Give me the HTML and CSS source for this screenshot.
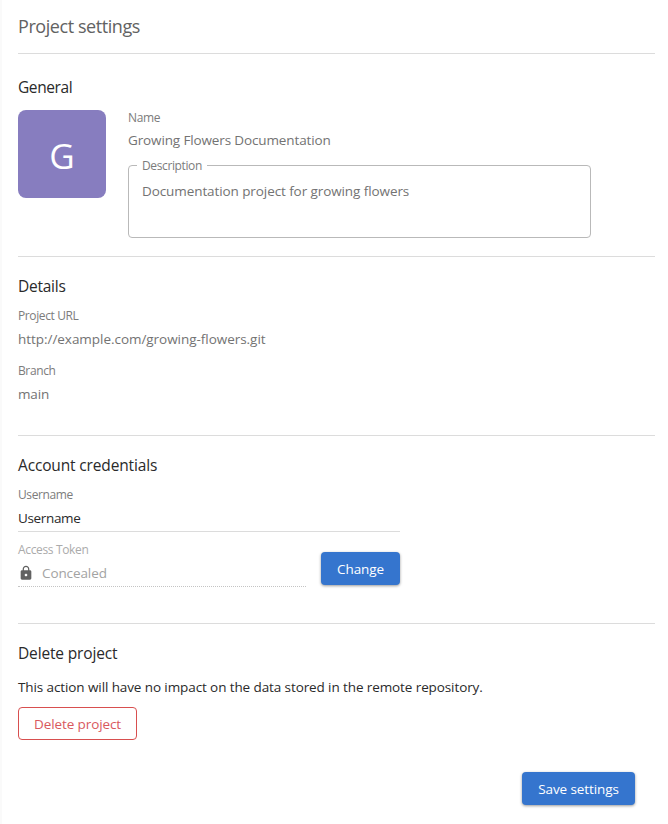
FILE: index.html
```html
<!DOCTYPE html>
<html lang="en">
<head>
<meta charset="utf-8">
<title>Project settings</title>
<link rel="stylesheet" href="styles.css">
</head>
<body>
<main class="page">
  <h1 class="title"><span>Project settings</span></h1>

  <section class="section general">
    <h2 class="heading heading-general"><span>General</span></h2>
    <div class="general-row">
      <div class="avatar">G</div>
      <div class="general-fields">
        <div class="label label-name"><span>Name</span></div>
        <div class="value value-name"><span>Growing Flowers Documentation</span></div>
        <fieldset class="description">
          <legend class="label label-description"><span>Description</span></legend>
          <div class="value value-description"><span>Documentation project for growing flowers</span></div>
        </fieldset>
      </div>
    </div>
  </section>

  <section class="section details">
    <h2 class="heading heading-details"><span>Details</span></h2>
    <div class="field">
      <div class="label"><span>Project URL</span></div>
      <div class="value value-url"><span>http://example.com/growing-flowers.git</span></div>
    </div>
    <div class="field">
      <div class="label"><span>Branch</span></div>
      <div class="value"><span>main</span></div>
    </div>
  </section>

  <section class="section account">
    <h2 class="heading"><span>Account credentials</span></h2>
    <div class="field field-line">
      <div class="label"><span>Username</span></div>
      <div class="value value-username"><span>Username</span></div>
    </div>
    <div class="token-row">
      <div class="field field-token">
        <div class="label label-token"><span>Access Token</span></div>
        <div class="value value-token">
          <svg class="lock" viewBox="0 0 24 24" width="16" height="16"><path fill="currentColor" d="M18 8h-1V6c0-2.76-2.24-5-5-5S7 3.24 7 6v2H6c-1.100 0-2 .9-2 2v10c0 1.100.9 2 2 2h12c1.100 0 2-.9 2-2V10c0-1.100-.9-2-2-2zm-6 9c-1.100 0-2-.9-2-2s.9-2 2-2 2 .9 2 2-.9 2-2 2zm3.100-9H8.900V6c0-1.710 1.390-3.100 3.100-3.100s3.100 1.390 3.100 3.100v2z"/></svg>
          <span>Concealed</span>
        </div>
      </div>
      <button class="button button-change"><span>Change</span></button>
    </div>
  </section>

  <section class="section delete">
    <h2 class="heading heading-delete"><span>Delete project</span></h2>
    <p class="note"><span>This action will have no impact on the data stored in the remote repository.</span></p>
    <button class="button button-delete"><span>Delete project</span></button>
  </section>

  <div class="actions">
    <button class="button button-save"><span>Save settings</span></button>
  </div>
</main>
</body>
</html>
```
FILE: styles.css
```css
* { box-sizing: border-box; }
body {
  margin: 0;
  background: #fff;
  color: #2a2a2a;
  font-family: "Open Sans", "Noto Sans", sans-serif;
  font-size: 13.5px;
  font-weight: 400;
}
.page {
  height: 824px;
  padding: 0 13px 0 16px;
  border-left: 2px solid #fafafa;
}
.title {
  margin: 0;
  height: 54px;
  border-bottom: 1px solid #dcdcdc;
  line-height: 53px;
  font-size: 18px;
  font-weight: 400;
  letter-spacing: -0.43px;
  color: #626262;
}
.section { border-bottom: 1px solid #dcdcdc; padding-top: 18px; }
.heading { margin: 0; font-size: 15.5px; font-weight: 400; line-height: 23px; height: 22px; letter-spacing: -0.15px; }
.general { height: 203px; padding-top: 22px; }
.heading-general { letter-spacing: -0.4px; }
.heading-details { letter-spacing: -0.25px; }
.general-row { display: flex; gap: 22px; margin-top: 12px; }
.avatar {
  width: 88px;
  height: 88px;
  border-radius: 8px;
  background: #877dbf;
  color: #fff;
  font-size: 35px;
  line-height: 92px;
  text-align: center;
}
.label { font-size: 12px; line-height: 18px; height: 16px; color: #7c7c7c; letter-spacing: -0.38px; }
.value { font-size: 13.5px; line-height: 21px; height: 20px; color: #737373; letter-spacing: -0.13px; }
.general-fields { width: 463px; }
.label-name { line-height: 16px; height: 15px; }
.description {
  height: 81px;
  margin: 7px 0 0;
  padding: 0 13px;
  border: 1px solid #b9b9b9;
  border-radius: 4px;
  min-width: 0;
}
.label-description { padding: 0 5px; margin-left: -5px; }
.value-description { letter-spacing: -0.09px; }
.value-url { letter-spacing: -0.04px; }
.details { height: 179px; }
.field { height: 42px; margin-top: 13px; }
.heading + .field { margin-top: 10px; }
.label + .value { margin-top: 6px; }
.label + .value-name { margin-top: 5px; }
.label + .value-description { margin-top: 8px; }
.account { height: 188px; }
.field-line { width: 382px; height: 46px; border-bottom: 1px solid #dcdcdc; }
.value-username { color: #2a2a2a; letter-spacing: -0.35px; }
.token-row { display: flex; align-items: flex-end; gap: 15px; width: 382px; margin-top: 9px; }
.field-token { width: 288px; height: 46px; margin: 0; border-bottom: 1px dotted #c4c4c4; }
.label-token { color: #ababab; letter-spacing: -0.35px; }
.value-token { display: flex; align-items: center; gap: 8px; color: #a3a3a3; letter-spacing: -0.1px; }
.lock { color: #616161; }
.button {
  display: block;
  height: 33px;
  padding: 0;
  border: 0;
  border-radius: 4px;
  background: #3575ce;
  color: #fff;
  font: 400 13.5px/34px "Open Sans", "Noto Sans", sans-serif;
  letter-spacing: -0.1px;
  text-align: center;
  box-shadow: 0 1px 3px rgba(0, 0, 0, .4);
}
.button-change { width: 79px; margin-bottom: 2px; }
.delete { height: 116px; border: 0; }
.note { margin: 13px 0 10px; line-height: 20px; font-size: 13.5px; letter-spacing: -0.1px; }
.button-delete { width: 119px; border: 1px solid #d84f4f; background: #fff; color: #d9585e; line-height: 32px; box-shadow: none; }
.actions { display: flex; justify-content: flex-end; padding: 32px 20px 0 0; }
.button-save { width: 113px; }
```
